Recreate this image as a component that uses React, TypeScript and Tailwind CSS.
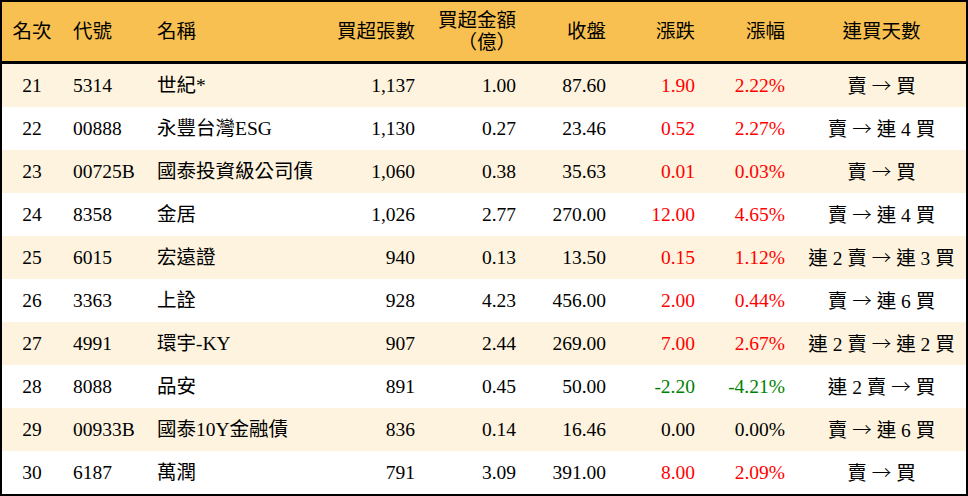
const cols = 'grid grid-cols-[60px_84px_184px_97px_101px_90px_89px_90px_169px]';

type Row = {
  rank: number;
  code: string;
  name: string;
  vol: string;
  amt: string;
  close: string;
  chg: string;
  pct: string;
  from: string;
  to: string;
};

const rows: Row[] = [
  { rank: 21, code: '5314', name: '世紀*', vol: '1,137', amt: '1.00', close: '87.60', chg: '1.90', pct: '2.22%', from: '賣', to: '買' },
  { rank: 22, code: '00888', name: '永豐台灣ESG', vol: '1,130', amt: '0.27', close: '23.46', chg: '0.52', pct: '2.27%', from: '賣', to: '連 4 買' },
  { rank: 23, code: '00725B', name: '國泰投資級公司債', vol: '1,060', amt: '0.38', close: '35.63', chg: '0.01', pct: '0.03%', from: '賣', to: '買' },
  { rank: 24, code: '8358', name: '金居', vol: '1,026', amt: '2.77', close: '270.00', chg: '12.00', pct: '4.65%', from: '賣', to: '連 4 買' },
  { rank: 25, code: '6015', name: '宏遠證', vol: '940', amt: '0.13', close: '13.50', chg: '0.15', pct: '1.12%', from: '連 2 賣', to: '連 3 買' },
  { rank: 26, code: '3363', name: '上詮', vol: '928', amt: '4.23', close: '456.00', chg: '2.00', pct: '0.44%', from: '賣', to: '連 6 買' },
  { rank: 27, code: '4991', name: '環宇-KY', vol: '907', amt: '2.44', close: '269.00', chg: '7.00', pct: '2.67%', from: '連 2 賣', to: '連 2 買' },
  { rank: 28, code: '8088', name: '品安', vol: '891', amt: '0.45', close: '50.00', chg: '-2.20', pct: '-4.21%', from: '連 2 賣', to: '買' },
  { rank: 29, code: '00933B', name: '國泰10Y金融債', vol: '836', amt: '0.14', close: '16.46', chg: '0.00', pct: '0.00%', from: '賣', to: '連 6 買' },
  { rank: 30, code: '6187', name: '萬潤', vol: '791', amt: '3.09', close: '391.00', chg: '8.00', pct: '2.09%', from: '賣', to: '買' },
];

const tone = (v: string) => {
  const n = parseFloat(v);
  if (n > 0) return 'text-[#ff0000]';
  if (n < 0) return 'text-[#008000]';
  return 'text-black';
};

export default function App() {
  return (
    <div className="w-[968px] h-[496px] bg-white font-['Liberation_Serif','Noto_Sans_CJK_TC',serif] text-[19.5px] text-black">
      <div className="border-2 border-black h-full">
        <div className={`${cols} h-[62px] bg-[#f8c050] border-b-[3px] border-black items-center leading-[22px]`}>
          <div className="text-center">名次</div>
          <div className="pl-[11px]">代號</div>
          <div className="pl-[11px]">名稱</div>
          <div className="text-right pr-[12px]">買超張數</div>
          <div className="text-right pr-[12px]">
            買超金額
            <br />
            （億）
          </div>
          <div className="text-right pr-[12px]">收盤</div>
          <div className="text-right pr-[12px]">漲跌</div>
          <div className="text-right pr-[12px]">漲幅</div>
          <div className="text-center">連買天數</div>
        </div>
        {rows.map((r, i) => (
          <div
            key={r.rank}
            className={`${cols} h-[43px] items-center ${i % 2 === 0 ? 'bg-[#fdf3de]' : 'bg-white'}`}
          >
            <div className="text-center">{r.rank}</div>
            <div className="pl-[11px]">{r.code}</div>
            <div className="pl-[11px] whitespace-nowrap">{r.name}</div>
            <div className="text-right pr-[12px]">{r.vol}</div>
            <div className="text-right pr-[12px]">{r.amt}</div>
            <div className="text-right pr-[12px]">{r.close}</div>
            <div className={`text-right pr-[12px] ${tone(r.chg)}`}>{r.chg}</div>
            <div className={`text-right pr-[12px] ${tone(r.pct)}`}>{r.pct}</div>
            <div className="text-center whitespace-nowrap">
              {r.from} <span className="font-['Noto_Sans_CJK_TC',sans-serif] font-light">→</span> {r.to}
            </div>
          </div>
        ))}
      </div>
    </div>
  );
}
